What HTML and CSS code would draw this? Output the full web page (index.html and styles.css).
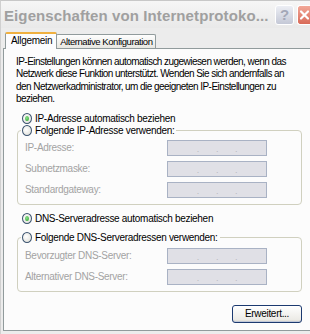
FILE: index.html
```html
<!DOCTYPE html>
<html lang="de">
<head>
<meta charset="utf-8">
<title>Eigenschaften von Internetprotokoll</title>
<link rel="stylesheet" href="styles.css">
</head>
<body>
<div class="window">
  <div class="titlebar">
    <div class="title">Eigenschaften von Internetprotoko...</div>
    <div class="tbtn help">?</div>
    <div class="tbtn close">
      <svg width="11" height="12" viewBox="0 0 11 12"><path d="M2 2.5 L9 9.5 M9 2.5 L2 9.5" stroke="#fff" stroke-width="2.2" stroke-linecap="round"/></svg>
    </div>
  </div>
  <div class="tabs">
    <div class="tab active">Allgemein</div>
    <div class="tab alt">Alternative Konfiguration</div>
  </div>
  <div class="panel">
    <p class="intro">IP-Einstellungen können automatisch zugewiesen werden, wenn das<br>Netzwerk diese Funktion unterstützt. Wenden Sie sich andernfalls an<br>den Netzwerkadministrator, um die geeigneten IP-Einstellungen zu<br>beziehen.</p>
    <div class="opt first"><span class="radio on"></span>IP-Adresse automatisch beziehen</div>
    <fieldset class="group g1">
      <legend><span class="radio"></span>Folgende IP-Adresse verwenden:</legend>
      <div class="row"><span class="lbl">IP-Adresse:</span><span class="ip"><i>.</i><i>.</i><i>.</i></span></div>
      <div class="row"><span class="lbl">Subnetzmaske:</span><span class="ip"><i>.</i><i>.</i><i>.</i></span></div>
      <div class="row"><span class="lbl">Standardgateway:</span><span class="ip"><i>.</i><i>.</i><i>.</i></span></div>
    </fieldset>
    <div class="opt"><span class="radio on"></span>DNS-Serveradresse automatisch beziehen</div>
    <fieldset class="group g2">
      <legend><span class="radio"></span>Folgende DNS-Serveradressen verwenden:</legend>
      <div class="row"><span class="lbl">Bevorzugter DNS-Server:</span><span class="ip"><i>.</i><i>.</i><i>.</i></span></div>
      <div class="row"><span class="lbl">Alternativer DNS-Server:</span><span class="ip"><i>.</i><i>.</i><i>.</i></span></div>
    </fieldset>
    <div class="actions"><span class="button">Erweitert...</span></div>
  </div>
</div>
</body>
</html>
```
FILE: styles.css
```css
html, body {
  margin: 0;
  padding: 0;
}
body {
  width: 310px;
  height: 334px;
  overflow: hidden;
  background: #d8d8d8;
  font-family: "Liberation Sans", Arial, sans-serif;
  font-size: 10px;
  letter-spacing: -0.3px;
  color: #000;
}
.window {
  width: 310px;
  height: 334px;
  background: #ececec;
  display: flex;
  flex-direction: column;
  border-top: 1px solid #c8c8c8;
  border-left: 1px solid #d0d0d0;
  box-sizing: border-box;
}
.titlebar {
  height: 27px;
  display: flex;
  align-items: center;
  padding-left: 3px;
  background: linear-gradient(#f6f6f6, #e9e9e9);
}
.title {
  flex: 1;
  min-width: 0;
  font-size: 15px;
  font-weight: bold;
  color: #a0a0a0;
  letter-spacing: 0.1px;
  white-space: nowrap;
  padding-top: 2px;
}
.tbtn {
  height: 20px;
  box-sizing: border-box;
  border-radius: 3px;
  display: flex;
  align-items: center;
  justify-content: center;
  flex: none;
}
.help {
  width: 19px;
  background: linear-gradient(#eceef4, #c4c8d6);
  border: 1px solid #fff;
  color: #a4a8b8;
  font-weight: bold;
  font-size: 15px;
  margin: 0 3px 0 4px;
}
.close {
  width: 13px;
  border-radius: 3px 0 0 3px;
  background: linear-gradient(#f2a898, #d86a58);
  border: 1px solid #fff;
  border-right: 0;
  justify-content: flex-start;
  padding-left: 1px;
}
.tabs {
  display: flex;
  align-items: flex-end;
  height: 20px;
  padding-left: 4px;
}
.tab {
  height: 14px;
  line-height: 13px;
  padding: 0 3px;
  border: 1px solid #919b9c;
  border-bottom: 0;
  border-radius: 2px 2px 0 0;
  background: linear-gradient(#fefefe, #e8e7e2);
  box-sizing: border-box;
  margin-left: -1px;
}
.tab.alt {
  font-size: 9.5px;
  letter-spacing: -0.45px;
}
.tab.active {
  height: 17px;
  line-height: 14px;
  background: #fcfcfe;
  border-top: 2px solid #f0b040;
  padding: 0 4px 0 5px;
  margin-left: 0;
  margin-bottom: -1px;
  position: relative;
  z-index: 1;
}
.panel {
  flex: 1;
  margin: 0 0 3px 2px;
  border: 1px solid #919b9c;
  border-right: 0;
  background: #fcfcfc;
  padding: 7px 8px 0 12px;
  display: flex;
  flex-direction: column;
}
.intro {
  margin: 0;
  line-height: 12.4px;
  white-space: nowrap;
  letter-spacing: -0.55px;
}
.opt {
  display: flex;
  align-items: center;
  height: 13px;
  margin: 7px 0 0 6px;
}
.opt.first {
  margin-top: 6px;
}
.radio {
  width: 10px;
  height: 11px;
  box-sizing: border-box;
  border: 1px solid #3c5470;
  border-radius: 50%;
  background: radial-gradient(circle at 40% 40%, #fff, #dcdcd4);
  margin-right: 3px;
  display: inline-flex;
  align-items: center;
  justify-content: center;
  flex: none;
}
.radio.on::after {
  content: "";
  width: 4px;
  height: 5px;
  border-radius: 50%;
  background: radial-gradient(circle at 40% 40%, #8ce08c, #21a121);
}
.group {
  margin: 6px 0 0 1px;
  padding: 2px 0 6px 0;
  border: 1px solid #d0d0bf;
  border-radius: 4px;
  min-width: 0;
}
.group.g1 {
  margin-top: -1px;
}
.group.g2 {
  padding-top: 3px;
}
.group legend {
  padding: 0 2px 0 1px;
  margin-left: 3px;
  display: flex;
  align-items: center;
  height: 13px;
}
.row {
  display: flex;
  align-items: center;
  height: 16px;
  margin-top: 5px;
  padding-left: 7px;
}
.group legend + .row {
  margin-top: 1px;
}
.lbl {
  width: 142px;
  color: #a3a3a3;
}
.ip {
  width: 100px;
  height: 16px;
  box-sizing: border-box;
  border: 1px solid #a9b2c4;
  background: #e0e0e6;
  display: flex;
  justify-content: space-evenly;
  align-items: flex-end;
  padding: 0 12px 1px;
  color: #b8b8c0;
  font-size: 9px;
  line-height: 10px;
}
.ip i {
  font-style: normal;
}
.actions {
  display: flex;
  justify-content: flex-end;
  margin-top: 13px;
}
.button {
  width: 70px;
  height: 18px;
  box-sizing: border-box;
  border: 1px solid #1c3a70;
  border-radius: 3px;
  background: linear-gradient(#ffffff, #ecebe6 85%, #d6d0c5);
  display: flex;
  align-items: center;
  justify-content: center;
  box-shadow: inset 0 -1px 0 #c0c8d8, inset 0 1px 0 #fff;
}
```
